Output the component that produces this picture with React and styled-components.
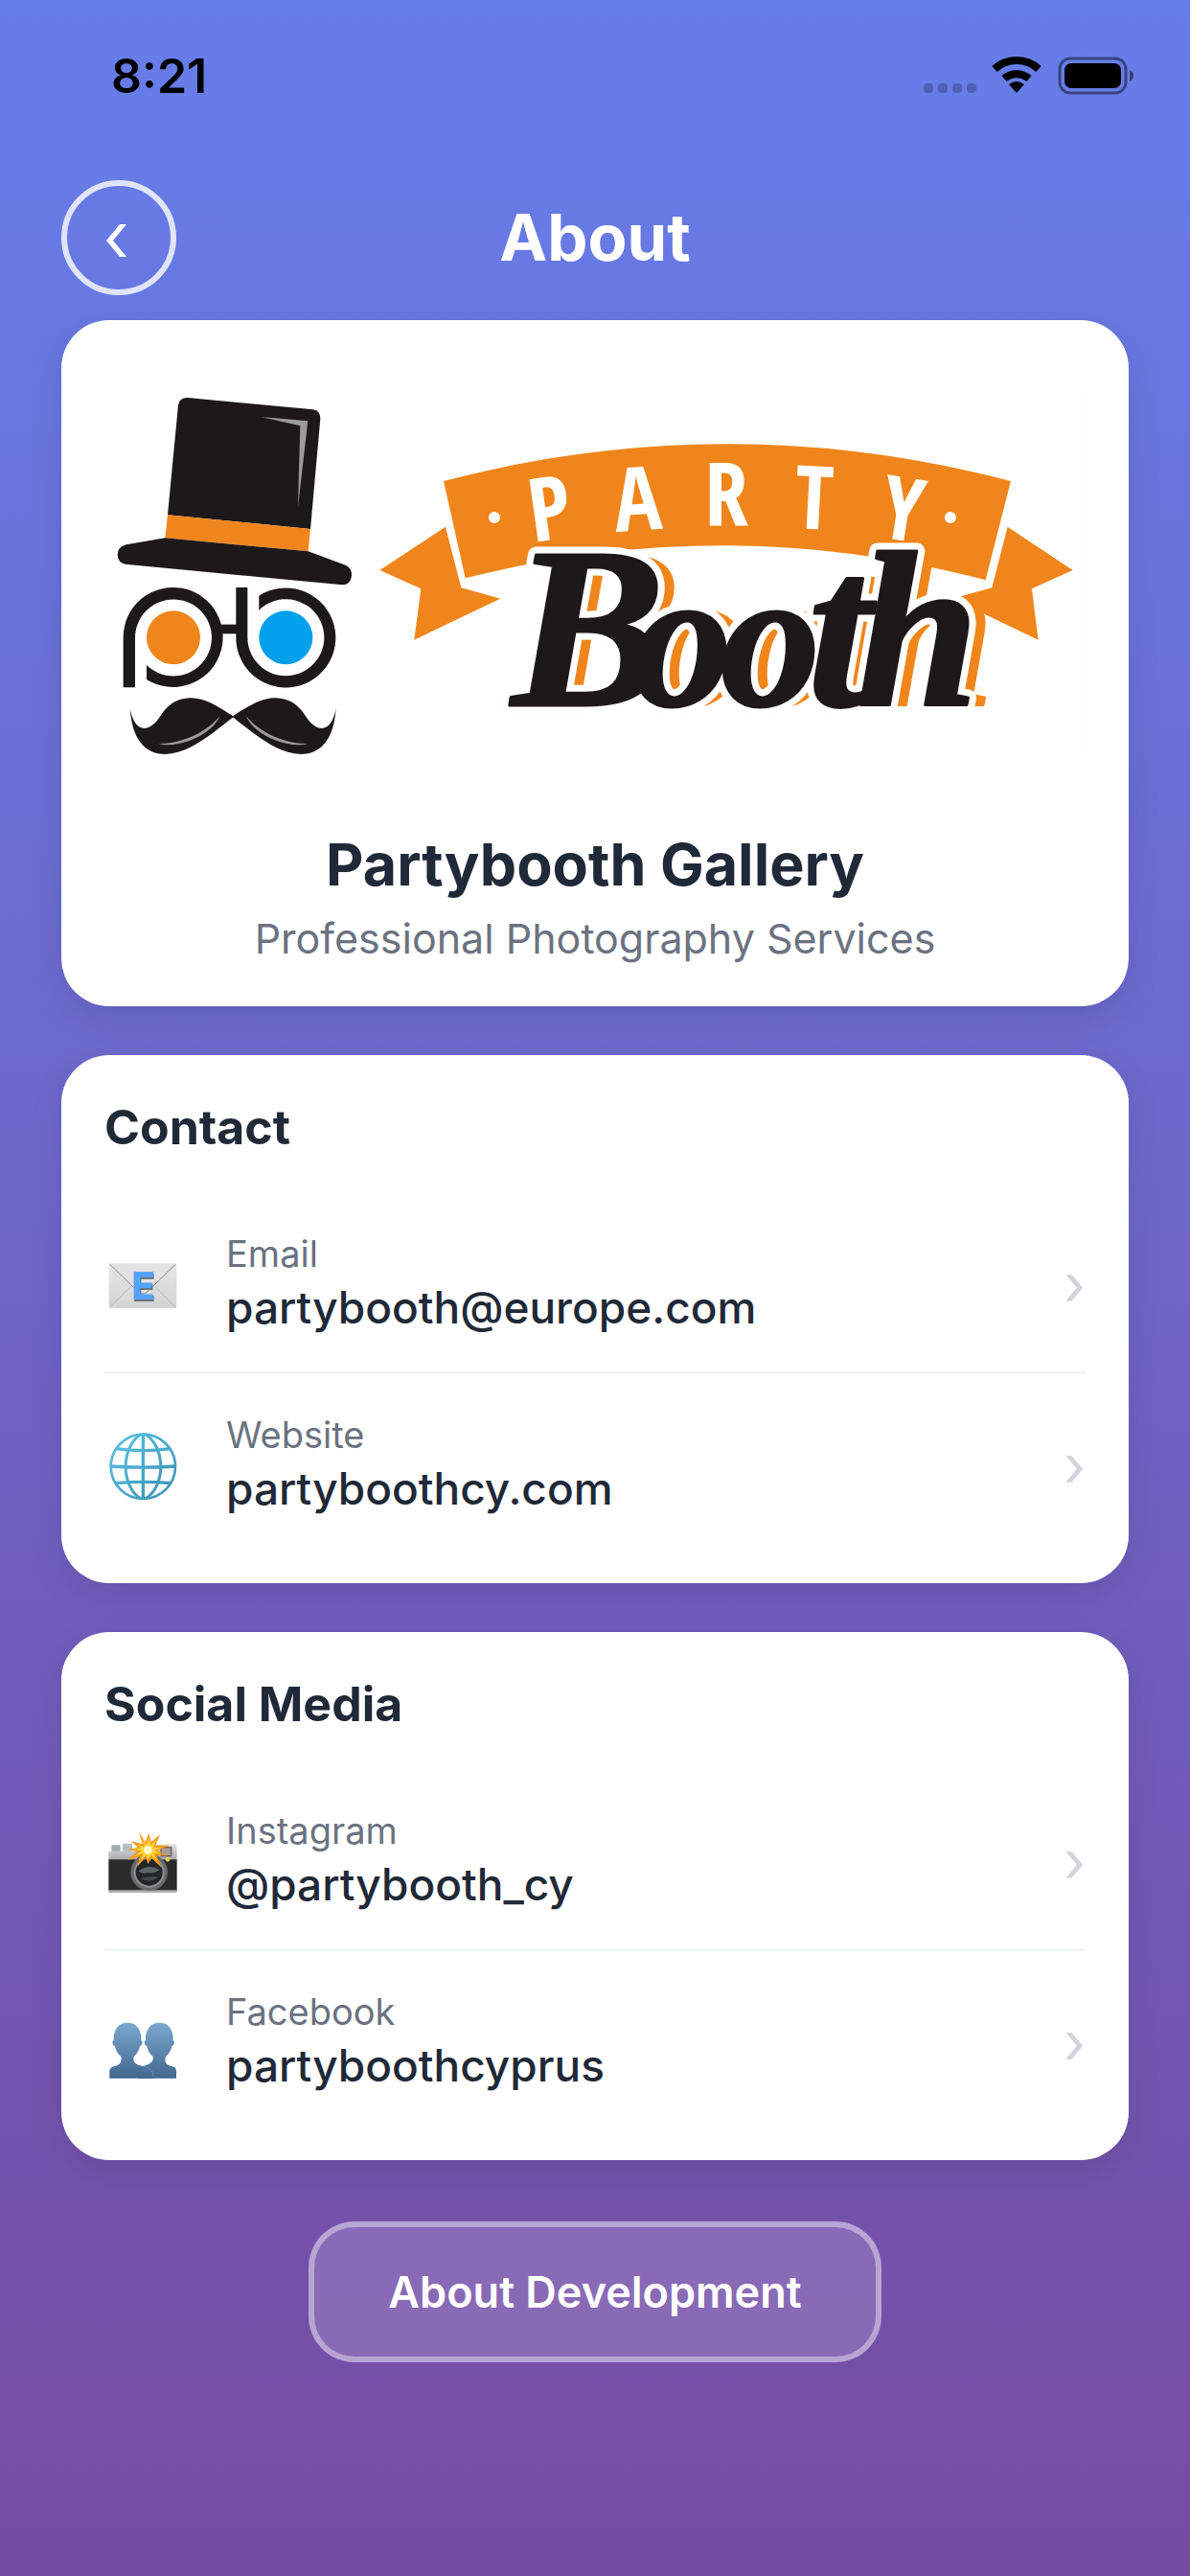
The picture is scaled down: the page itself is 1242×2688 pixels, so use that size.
import React from 'react';
import styled, { createGlobalStyle } from 'styled-components';

const GlobalStyle = createGlobalStyle`
  * {
    box-sizing: border-box;
  }
  body {
    margin: 0;
    font-family: Inter, 'Liberation Sans', sans-serif;
    -webkit-font-smoothing: antialiased;
  }
`;

const Screen = styled.div`
  min-height: 100vh;
  display: flex;
  flex-direction: column;
  background: linear-gradient(180deg, #667eea 0%, #764ba2 100%);
`;
const StatusBar = styled.div`
  display: flex;
  align-items: center;
  justify-content: space-between;
  height: 158px;
  padding: 0 58px 0 116px;
`;
const Time = styled.span`
  font-size: 50px;
  font-weight: 600;
  color: black;
`;
const Indicators = styled.svg`
  width: 222px;
  height: 44px;
`;
const Header = styled.header`
  display: grid;
  grid-template-columns: 120px 1fr 120px;
  align-items: center;
  padding: 30px 64px 26px;
`;
const BackButton = styled.button`
  display: flex;
  align-items: center;
  justify-content: center;
  width: 120px;
  height: 120px;
  padding: 0;
  border: 6px solid rgba(255, 255, 255, 0.8);
  border-radius: 50%;
  background: transparent;
  cursor: pointer;
`;
const BackIcon = styled.svg`
  width: 72px;
  height: 72px;
`;
const Title = styled.h1`
  margin: 0;
  font-size: 67px;
  font-weight: 700;
  line-height: 80px;
  text-align: center;
  color: white;
`;
const Content = styled.main`
  display: flex;
  flex-direction: column;
  gap: 51px;
  padding: 0 64px 64px;
`;
const Card = styled.section`
  padding: ${props => (props.$hero ? '45px' : '45px 45px 32px')};
  border-radius: 50px;
  background: white;
  box-shadow: 0 12px 36px rgba(0, 0, 0, 0.1);
`;
const Logo = styled.svg`
  display: block;
  width: 100%;
  height: auto;
`;
const AppName = styled.h2`
  margin: 45px 0 13px;
  font-size: 61px;
  font-weight: 700;
  line-height: 76px;
  text-align: center;
  color: #1f2937;
`;
const Tagline = styled.p`
  margin: 0;
  font-size: 43px;
  line-height: 52px;
  text-align: center;
  color: #6b7280;
`;
const SectionTitle = styled.h2`
  margin: 0 0 39px;
  font-size: 50px;
  font-weight: 700;
  line-height: 60px;
  color: #1f2937;
`;
const Row = styled.a`
  display: flex;
  align-items: center;
  padding: 39px 0 35px;
  text-decoration: none;
  & + & {
    border-top: 3px solid #f3f4f6;
  }
`;
const RowIcon = styled.svg`
  flex: none;
  width: 80px;
  height: 80px;
  margin-right: 47px;
`;
const RowText = styled.span`
  display: flex;
  flex-direction: column;
  flex: 1;
`;
const Label = styled.span`
  font-size: 38px;
  line-height: 48px;
  color: #6b7280;
`;
const Value = styled.span`
  font-size: 46px;
  font-weight: 500;
  line-height: 64px;
  color: #1f2937;
`;
const Chevron = styled.span`
  font-size: 60px;
  line-height: 64px;
  color: #d1d5db;
`;
const DevButton = styled.button`
  align-self: center;
  height: 147px;
  margin-top: 13px;
  padding: 0 77px;
  border: 6px solid rgba(255, 255, 255, 0.4);
  border-radius: 48px;
  background: rgba(255, 255, 255, 0.15);
  font-family: inherit;
  font-size: 45px;
  font-weight: 600;
  color: white;
  cursor: pointer;
`;

const StatusIcons = () => (
  <Indicators viewBox="0 0 222 44" aria-hidden="true">
    <g fill="#000" opacity="0.22">
      <rect x="2" y="30" width="10" height="10" rx="4" />
      <rect x="17" y="30" width="10" height="10" rx="4" />
      <rect x="32" y="30" width="10" height="10" rx="4" />
      <rect x="47" y="30" width="10" height="10" rx="4" />
    </g>
    <g fill="none" stroke="#000" strokeWidth="8">
      <path d="M76 15 A34 34 0 0 1 122 15" />
      <path d="M86 25 A20 20 0 0 1 112 25" />
    </g>
    <path d="M91 31 Q99 25 107 31 L99 40 Z" />
    <rect x="144" y="4" width="69" height="36" rx="11" fill="none" stroke="#000" strokeOpacity="0.45" strokeWidth="3" />
    <rect x="149" y="9" width="59" height="26" rx="7" />
    <path d="M217 16 Q221 18 221 22 Q221 26 217 28 Z" fillOpacity="0.5" />
  </Indicators>
);

const PartyBoothLogo = () => (
  <Logo viewBox="109 379 1024 440" role="img" aria-label="Party Booth">
    <defs>
      <text
        id="booth"
        fontFamily="'Liberation Serif', serif"
        fontStyle="italic"
        fontWeight="700"
        fontSize="208"
        y="736"
      >
        <tspan x="534" fontSize="240">B</tspan>
        <tspan x="660">o</tspan>
        <tspan x="752">o</tspan>
        <tspan x="843" fontSize="236">t</tspan>
        <tspan x="894" fontSize="230">h</tspan>
      </text>
    </defs>
    <rect x="109" y="406" width="1024" height="386" fill="#fefefe" />
    <g transform="translate(100 390) scale(0.3333)" fill="#1d191a">
      <path d="M225 442 L258 98 Q262 74 288 75 L680 112 Q704 116 703 142 L672 486 Z" />
      <path d="M225 442 L672 486 L665 556 L217 514 Z" fill="#f0861b" />
      <path d="M217 514 L95 535 Q68 541 68 568 Q70 592 92 596 L772 661 Q798 660 801 632 Q802 608 782 599 L665 556 Z" />
      <path d="M518 135 L664 148 L633 418 L640 163 Z" fill="#9b9b9b" />
      <path d="M86 982 V826 A156 156 0 1 1 159 957 V912 A120 120 0 1 0 123 826 V982 Z" />
      <path d="M439 669 V826 A156 156 0 1 0 511 695 V740 A120 120 0 1 1 475 826 V669 Z" />
      <rect x="388" y="785" width="56" height="29" />
      <circle cx="243" cy="826" r="84" fill="#f0861b" />
      <circle cx="595" cy="826" r="84" fill="#00a1ea" />
      <g id="moustache">
        <path d="M432 1073 C380 1040 340 1014 296 1015 C255 1017 235 1030 210 1060 C195 1085 175 1110 152 1110 C130 1110 113 1085 107 1047 C112 1130 145 1191 217 1191 C290 1190 360 1130 432 1073 Z" />
        <path d="M388 1072 C350 1120 270 1160 195 1158 C260 1175 365 1130 388 1072 Z" fill="#9b9b9b" />
      </g>
      <use href="#moustache" transform="translate(859 0) scale(-1 1)" />
    </g>
    <g transform="translate(380 430) scale(0.3333)" fill="#f0861b">
      <path d="M249 216 Q1137 -16 2025 216 L1946 526 Q1132 313 317 520 Z" />
      <path d="M255 359 L49 495 L178 553 L157 713 L427 584 L304 550 Z" />
      <path d="M2015 359 L2219 495 L2091 553 L2111 713 L1841 584 L1966 550 Z" />
      <circle cx="408" cy="330" r="18" fill="#fff" />
      <circle cx="1836" cy="330" r="18" fill="#fff" />
    </g>
    <text
      x="556 643 735 828 916"
      y="566 555 549 551 560"
      rotate="-8 -4 0 3 9"
      fill="#fff"
      fontFamily="'Liberation Sans Narrow', 'Open Sans Condensed', 'Liberation Sans', sans-serif"
      fontWeight="700"
      fontSize="92"
    >
      PARTY
    </text>
    <g strokeLinejoin="round">
      <use href="#booth" x="17" fill="#f0861b" stroke="#f0861b" strokeWidth="3" />
      <use href="#booth" fill="#fff" stroke="#fff" strokeWidth="17" />
      <use href="#booth" fill="#1d191a" stroke="#1d191a" strokeWidth="3" />
    </g>
  </Logo>
);

const EmailIcon = () => (
  <RowIcon viewBox="15 9 240 240" aria-hidden="true">
    <defs>
      <linearGradient id="paper" x1="0" y1="0" x2="0" y2="1">
        <stop offset="0" stopColor="#e6e6e6" />
        <stop offset="1" stopColor="#d3d3d3" />
      </linearGradient>
    </defs>
    <rect x="29" y="64" width="212" height="140" rx="5" fill="url(#paper)" />
    <path d="M31 202 L100 133 M239 202 L170 133" stroke="#bdbdbd" strokeWidth="3" />
    <path d="M31 66 L120 152 Q135 166 150 152 L239 66" fill="#e2e2e2" stroke="#8d8d8d" strokeWidth="3" />
    <text x="102" y="182" fontFamily="Inter, sans-serif" fontWeight="800" fontSize="120" fill="#6c7078">E</text>
    <text x="100" y="178" fontFamily="Inter, sans-serif" fontWeight="800" fontSize="120" fill="#55a2fb">E</text>
  </RowIcon>
);

const GlobeIcon = () => (
  <RowIcon viewBox="15 576 240 240" aria-hidden="true">
    <defs>
      <linearGradient id="globe" gradientUnits="userSpaceOnUse" x1="30" y1="594" x2="240" y2="806">
        <stop offset="0" stopColor="#58c6e6" />
        <stop offset="1" stopColor="#3a8db0" />
      </linearGradient>
    </defs>
    <g fill="none" stroke="url(#globe)">
      <circle cx="136" cy="700" r="101" strokeWidth="8" />
      <path strokeWidth="10" d="M136 596 V804 M34 699 Q136 706 238 699" />
      <path strokeWidth="10" d="M50 644 Q136 656 222 644 M50 752 Q136 744 222 752" />
      <path strokeWidth="9" d="M130 598 C65 640 65 760 130 802 M142 598 C208 640 208 760 142 802" />
    </g>
  </RowIcon>
);

const CameraIcon = () => (
  <RowIcon viewBox="15 1 240 240" aria-hidden="true">
    <defs>
      <linearGradient id="silver" x1="0" y1="0" x2="0" y2="1">
        <stop offset="0" stopColor="#e2e2e2" />
        <stop offset="1" stopColor="#a9a9a9" />
      </linearGradient>
    </defs>
    <rect x="37" y="71" width="28" height="22" rx="4" fill="#a5a9ad" />
    <rect x="72" y="66" width="30" height="26" rx="4" fill="#b9bdc0" />
    <path d="M28 90 H110 L122 68 H238 Q242 68 242 74 V118 H28 Z" fill="url(#silver)" />
    <rect x="28" y="116" width="214" height="98" fill="#2b2b2c" />
    <rect x="28" y="212" width="214" height="8" rx="3" fill="#b0b0b0" />
    <rect x="190" y="76" width="36" height="31" fill="#6a5f5c" />
    <rect x="194" y="80" width="28" height="23" fill="#a79c98" />
    <circle cx="213" cy="116" r="7" fill="#f8d04b" />
    <circle cx="155" cy="156" r="58" fill="#66696b" />
    <circle cx="155" cy="156" r="48" fill="#8d9193" />
    <circle cx="155" cy="156" r="42" fill="#232628" />
    <path d="M122 152 Q155 128 188 148 Q175 160 150 158 Q132 164 122 152 Z" fill="#5d6366" />
    <path d="M128 176 Q158 166 184 170 Q160 192 128 176 Z" fill="#444a4d" />
    <path
      d="M123 30 L143 62 L154 34 L161 62 L189 38 L175 72 L219 72 L180 88 L212 104 L178 103 L194 142 L163 112 L151 130 L144 109 L118 138 L126 105 L88 118 L118 91 L88 85 L120 78 L98 58 L134 68 Z"
      fill="#f9960c"
    />
    <path
      d="M132 48 L146 70 L154 50 L160 70 L178 54 L168 78 L196 78 L172 88 L192 98 L170 96 L182 124 L160 102 L151 118 L146 102 L128 120 L136 98 L108 106 L130 89 L104 84 L130 80 L112 67 L140 76 Z"
      fill="#ffd43a"
    />
    <circle cx="151" cy="86" r="13" fill="#fff9c9" />
  </RowIcon>
);

const PeopleIcon = () => (
  <RowIcon viewBox="15 568 240 240" aria-hidden="true">
    <defs>
      <linearGradient id="bust" gradientUnits="userSpaceOnUse" x1="0" y1="627" x2="0" y2="801">
        <stop offset="0" stopColor="#7ba9cd" />
        <stop offset="1" stopColor="#42678f" />
      </linearGradient>
    </defs>
    <path
      fill="url(#bust)"
      d="M187 627 C157 627 143 650 144 683 C138 683 139 698 148 701 C151 716 158 726 167 733 C169 750 160 756 135 763 L120 801 H240 V778 C240 766 230 764 222 762 C206 757 203 748 207 733 C216 726 224 714 226 701 C235 698 236 684 230 683 C232 650 217 627 187 627 Z"
    />
    <path
      fill="url(#bust)"
      d="M87 627 C57 627 43 650 44 683 C38 683 39 698 48 701 C51 716 58 726 67 733 C70 748 66 757 50 762 C40 765 31 767 31 780 V801 H167 C167 780 160 768 135 763 C110 757 104 750 107 733 C116 726 124 714 126 701 C135 698 136 684 130 683 C132 650 117 627 87 627 Z"
    />
    <path d="M135 763 C160 768 168 780 167 794" fill="none" stroke="#6fa3c4" strokeWidth="2" />
  </RowIcon>
);

const sections = [
  {
    title: 'Contact',
    rows: [
      { icon: EmailIcon, label: 'Email', value: 'partybooth@europe.com', href: 'mailto:partybooth@europe.com' },
      { icon: GlobeIcon, label: 'Website', value: 'partyboothcy.com', href: '#website' },
    ],
  },
  {
    title: 'Social Media',
    rows: [
      { icon: CameraIcon, label: 'Instagram', value: '@partybooth_cy', href: '#instagram' },
      { icon: PeopleIcon, label: 'Facebook', value: 'partyboothcyprus', href: '#facebook' },
    ],
  },
];

export default function App() {
  return (
    <Screen>
      <GlobalStyle />
      <StatusBar>
        <Time>8:21</Time>
        <StatusIcons />
      </StatusBar>
      <Header>
        <BackButton aria-label="Back">
          <BackIcon viewBox="0 0 72 72" aria-hidden="true">
            <path d="M37 22 H44 L30 39 L44 56 H37 L23 39 Z" fill="#fff" />
          </BackIcon>
        </BackButton>
        <Title>About</Title>
      </Header>
      <Content>
        <Card $hero>
          <PartyBoothLogo />
          <AppName>Partybooth Gallery</AppName>
          <Tagline>Professional Photography Services</Tagline>
        </Card>
        {sections.map(section => (
          <Card key={section.title}>
            <SectionTitle>{section.title}</SectionTitle>
            {section.rows.map(({ icon: Icon, label, value, href }) => (
              <Row key={label} href={href}>
                <Icon />
                <RowText>
                  <Label>{label}</Label>
                  <Value>{value}</Value>
                </RowText>
                <Chevron aria-hidden="true">›</Chevron>
              </Row>
            ))}
          </Card>
        ))}
        <DevButton>About Development</DevButton>
      </Content>
    </Screen>
  );
}
